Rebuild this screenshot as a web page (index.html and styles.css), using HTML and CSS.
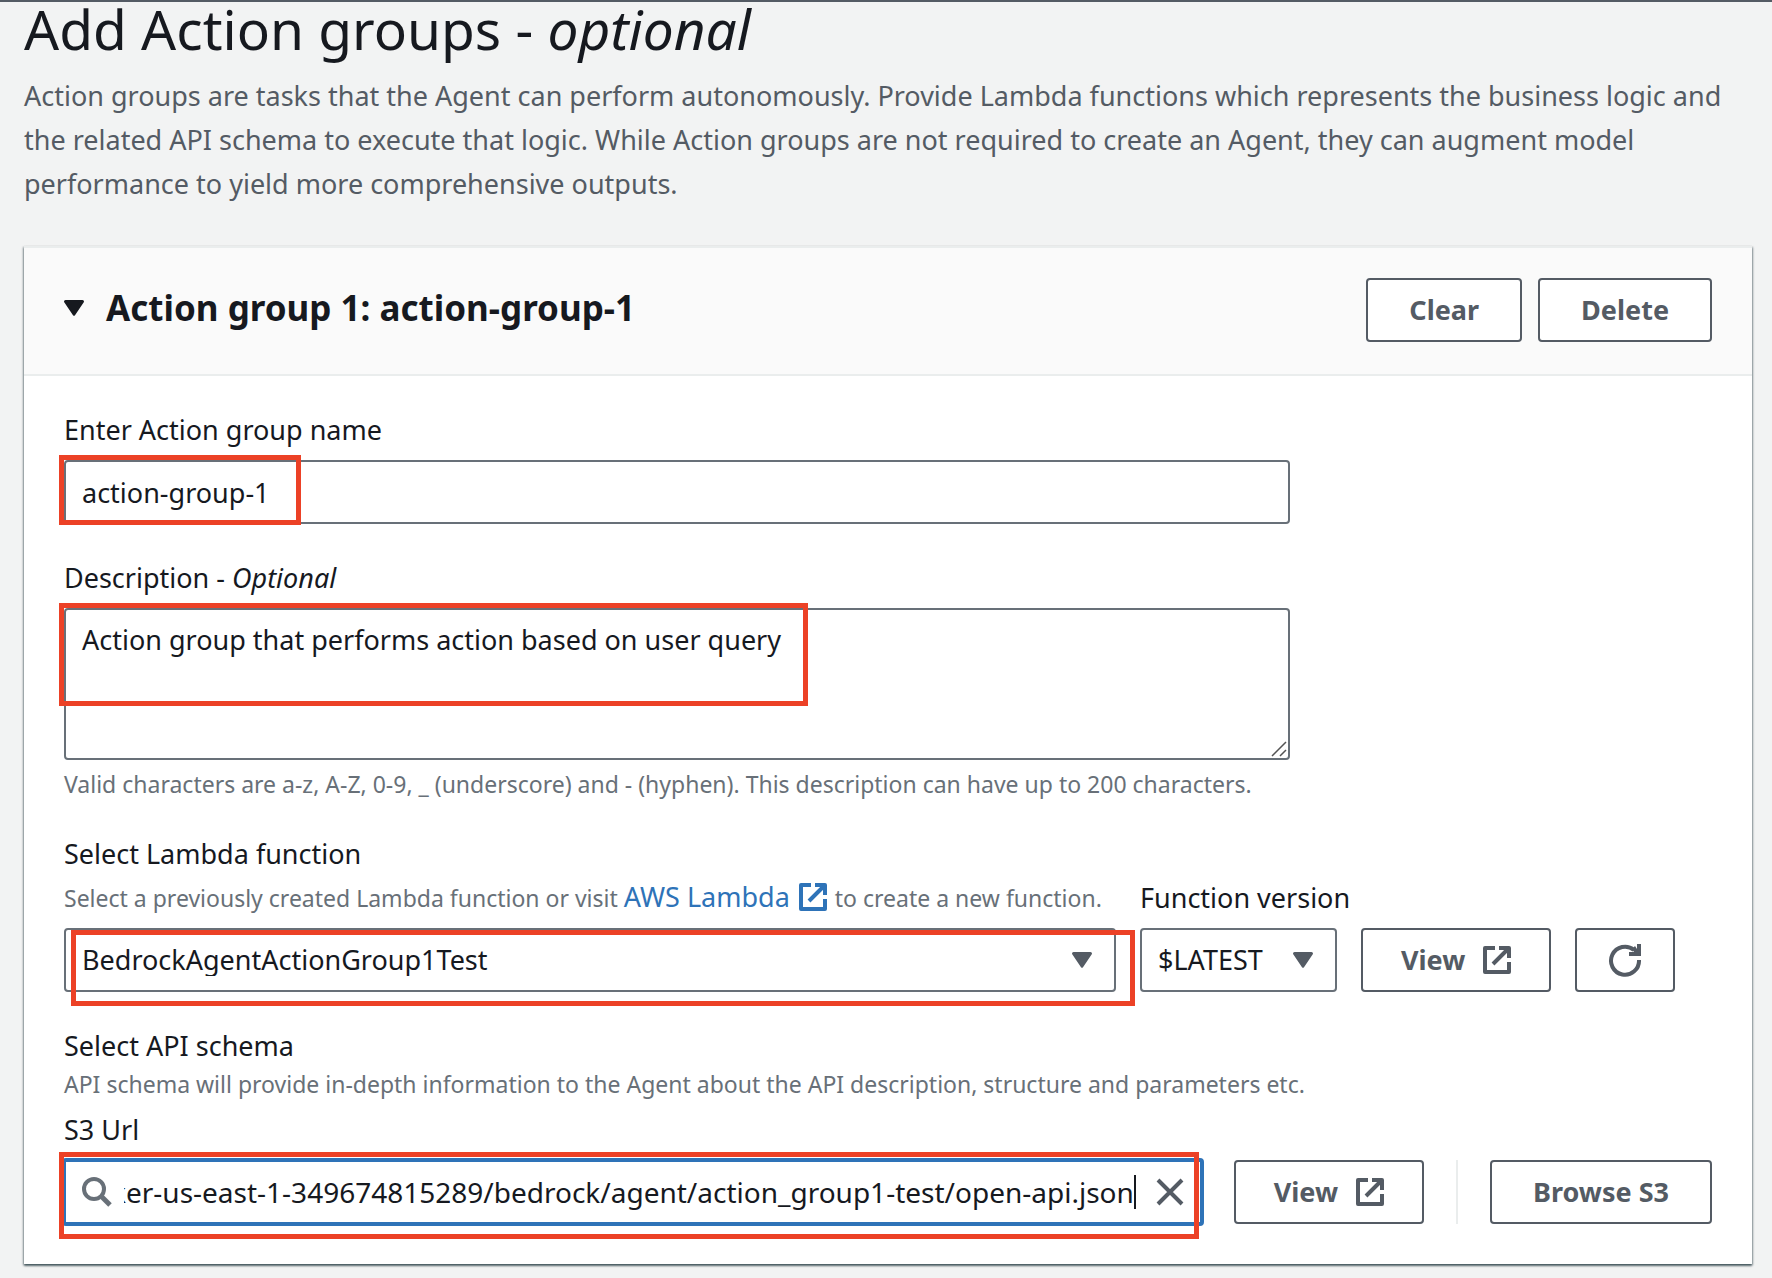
FILE: index.html
```html
<!DOCTYPE html>
<html lang="en">
<head>
<meta charset="utf-8">
<meta name="viewport" content="width=device-width, initial-scale=1">
<title>Add Action groups</title>
<link rel="stylesheet" href="styles.css">
</head>
<body>
<svg class="sprite" aria-hidden="true">
  <symbol id="icon-external" viewBox="0 0 28 28">
    <path d="M12 2H2v24h24V16M16 2h10v10M25 3L10 18" fill="none" stroke="currentColor" stroke-width="4" stroke-linejoin="round"/>
  </symbol>
  <symbol id="icon-caret" viewBox="0 0 20 16">
    <path d="M1.500 0h17q1.500 0 1.500 1.500 0 .5-.4 1L11 15.200q-1 1.300-2 0L.4 2.500Q0 2 0 1.500 0 0 1.500 0z" fill="currentColor"/>
  </symbol>
</svg>
<main class="page">
  <header class="page-header">
    <h1 class="page-title">Add Action groups - <em>optional</em></h1>
    <p class="page-description">Action groups are tasks that the Agent can perform autonomously. Provide Lambda functions which represents the business logic and the related API schema to execute that logic. While Action groups are not required to create an Agent, they can augment model performance to yield more comprehensive outputs.</p>
  </header>

  <section class="card">
    <div class="card-header">
      <h2 class="card-title"><svg class="card-caret" aria-hidden="true"><use href="#icon-caret"/></svg>Action group 1: action-group-1</h2>
      <div class="card-actions">
        <button class="button" type="button">Clear</button>
        <button class="button" type="button">Delete</button>
      </div>
    </div>

    <form class="card-body">
      <div class="field field-limited">
        <label class="label" for="group-name">Enter Action group name</label>
        <div class="control">
          <input class="input" id="group-name" type="text" value="action-group-1">
          <span class="highlight highlight-name"></span>
        </div>
      </div>

      <div class="field field-limited">
        <label class="label" for="description">Description - <em>Optional</em></label>
        <div class="control">
          <textarea class="input textarea" id="description">Action group that performs action based on user query</textarea>
          <svg class="grip" viewBox="0 0 16 16" aria-hidden="true"><path d="M1 15L15 1M9 15l6-6" stroke="#545454" stroke-width="1.500" fill="none"/></svg>
          <span class="highlight highlight-description"></span>
        </div>
        <p class="hint">Valid characters are a-z, A-Z, 0-9, _ (underscore) and - (hyphen). This description can have up to 200 characters.</p>
      </div>

      <div class="lambda-row">
        <div class="lambda-function">
          <label class="label" for="lambda">Select Lambda function</label>
          <p class="hint hint-link">Select a previously created Lambda function or visit <a class="link" href="#lambda">AWS Lambda <svg class="link-icon" aria-hidden="true"><use href="#icon-external"/></svg></a> to create a new function.</p>
          <div class="control">
            <select class="input select" id="lambda"><option>BedrockAgentActionGroup1Test</option></select>
            <svg class="select-caret" aria-hidden="true"><use href="#icon-caret"/></svg>
            <span class="highlight highlight-lambda"></span>
          </div>
        </div>
        <div class="lambda-version">
          <label class="label" for="version">Function version</label>
          <div class="control">
            <select class="input select" id="version"><option>$LATEST</option></select>
            <svg class="select-caret" aria-hidden="true"><use href="#icon-caret"/></svg>
          </div>
        </div>
        <button class="button button-external" type="button">View <svg class="button-icon" aria-hidden="true"><use href="#icon-external"/></svg></button>
        <button class="button button-refresh" type="button" aria-label="Refresh">
          <svg class="refresh-icon" viewBox="0 0 34 34" aria-hidden="true"><path d="M31 17a14 14 0 1 1-5-10" fill="none" stroke="currentColor" stroke-width="4"/><path d="M29 1h4v12H21V9h5l-2-3 3-3 2 3z" fill="currentColor"/></svg>
        </button>
      </div>

      <div class="field schema">
        <h3 class="label">Select API schema</h3>
        <p class="hint schema-hint">API schema will provide in-depth information to the Agent about the API description, structure and parameters etc.</p>
        <label class="label schema-label" for="s3-url">S3 Url</label>
        <div class="s3-row">
          <div class="control search">
            <svg class="search-icon" viewBox="0 0 30 30" aria-hidden="true"><path d="M20 20l8 8" stroke="currentColor" stroke-width="5"/><circle cx="12" cy="12" r="10" fill="none" stroke="currentColor" stroke-width="4"/></svg>
            <input class="search-input" id="s3-url" type="text" value="ker-us-east-1-349674815289/bedrock/agent/action_group1-test/open-api.json">
            <span class="text-cursor"></span>
            <button class="clear" type="button" aria-label="Clear S3 Url"><svg class="clear-icon" viewBox="0 0 28 28" aria-hidden="true"><path d="M2 2l24 24M26 2L2 26" stroke="currentColor" stroke-width="4"/></svg></button>
            <span class="highlight highlight-s3"></span>
          </div>
          <button class="button button-external" type="button">View <svg class="button-icon" aria-hidden="true"><use href="#icon-external"/></svg></button>
          <span class="divider"></span>
          <button class="button" type="button">Browse S3</button>
        </div>
      </div>
    </form>
  </section>
</main>
<script src="script.js"></script>
</body>
</html>
```
FILE: styles.css
```css
* {
  box-sizing: border-box;
}

body {
  margin: 0;
  background: #f2f3f3;
  color: #16191f;
  font: 27px/32px "Noto Sans", "Open Sans", sans-serif;
}

h1, h2, h3, p {
  margin: 0;
}

button, input, select, textarea {
  margin: 0;
  font: inherit;
  color: inherit;
}

.sprite {
  position: absolute;
  width: 0;
  height: 0;
}

.page {
  padding: 0 20px 14px 24px;
  border-top: 2px solid #545b64;
}

.page-title {
  font-size: 55px;
  font-weight: 400;
  line-height: 54px;
}

.page-description {
  padding: 18px 24px 40px 0;
  color: #545b64;
  line-height: 44px;
}

.card {
  background: #fff;
  border-top: 2px solid #eaeded;
  box-shadow: 0 2px 2px rgba(0, 28, 36, 0.5), 1px 1px 2px rgba(0, 28, 36, 0.3), -1px 1px 2px rgba(0, 28, 36, 0.3);
}

.card-header {
  display: flex;
  align-items: center;
  justify-content: space-between;
  padding: 30px 40px 32px;
  background: #fafafa;
  border-bottom: 2px solid #eaeded;
}

.card-title {
  display: flex;
  align-items: center;
  gap: 22px;
  padding-bottom: 4px;
  font-size: 35px;
  font-weight: 700;
  line-height: 44px;
}

.card-caret {
  width: 20px;
  height: 16px;
}

.card-actions {
  display: flex;
  gap: 16px;
}

.button {
  display: flex;
  align-items: center;
  justify-content: center;
  height: 64px;
  padding: 0 41px;
  background: #fff;
  border: 2px solid #545b64;
  border-radius: 4px;
  color: #545b64;
  font-weight: 700;
  white-space: nowrap;
}

.button-external {
  gap: 18px;
  padding: 0 38px;
}

.button-icon {
  width: 28px;
  height: 28px;
}

.button-refresh {
  width: 100px;
  padding: 0;
}

.refresh-icon {
  width: 34px;
  height: 34px;
}

.card-body {
  display: flex;
  flex-direction: column;
  gap: 38px;
  padding: 38px 40px 40px;
}

.field-limited {
  max-width: 1226px;
}

.label {
  display: block;
  font-size: 27px;
  font-weight: 400;
  line-height: 32px;
  white-space: nowrap;
}

.control {
  position: relative;
  margin-top: 14px;
}

.input {
  display: block;
  width: 100%;
  height: 64px;
  padding: 0 16px;
  background: #fff;
  border: 2px solid #687078;
  border-radius: 4px;
}

.textarea {
  height: 152px;
  padding: 14px 16px;
  resize: none;
}

.grip {
  position: absolute;
  right: 3px;
  bottom: 3px;
  width: 16px;
  height: 16px;
}

.select {
  appearance: none;
  padding-right: 60px;
}

.select-caret {
  position: absolute;
  top: 24px;
  right: 24px;
  width: 20px;
  height: 16px;
  color: #545b64;
  pointer-events: none;
}

.hint {
  padding-top: 8px;
  color: #687078;
  font-size: 23px;
  line-height: 32px;
}

.hint-link {
  padding-top: 11px;
}

.link {
  color: #2e73b8;
  font-size: 27px;
  text-decoration: none;
}

.link-icon {
  width: 28px;
  height: 28px;
  margin: 0 2px;
  vertical-align: -4px;
}

.lambda-row {
  display: grid;
  grid-template-columns: minmax(0, 1052px) 197px auto auto;
  align-items: end;
  justify-content: start;
  gap: 24px;
}

.highlight {
  position: absolute;
  border: 5px solid #ec4126;
  pointer-events: none;
}

.highlight-name {
  top: -5px;
  left: -5px;
  width: 242px;
  height: 70px;
}

.highlight-description {
  top: -5px;
  left: -5px;
  width: 749px;
  height: 103px;
}

.highlight-lambda {
  top: 2px;
  left: 7px;
  right: -19px;
  height: 76px;
}

.highlight-s3 {
  top: -8px;
  left: -5px;
  right: 3px;
  height: 87px;
}

.schema-hint {
  padding-top: 6px;
}

.schema-label {
  padding-top: 14px;
}

.s3-row {
  display: flex;
  align-items: center;
  gap: 32px;
  margin-top: 14px;
}

.search {
  display: flex;
  flex: 1;
  align-items: center;
  height: 64px;
  margin: 0;
  padding: 0 18px;
  border-radius: 2px;
  outline: 4px solid #2e73b8;
  outline-offset: -2px;
}

.search-icon {
  width: 30px;
  height: 30px;
  margin-right: 12px;
  color: #687078;
}

.search-input {
  flex: 1;
  min-width: 0;
  height: 44px;
  padding: 0;
  background: none;
  border: 0;
  outline: 0;
  font-size: 28px;
}

.text-cursor {
  width: 2px;
  height: 34px;
  background: #16191f;
}

.clear {
  display: flex;
  margin-left: 20px;
  padding: 0;
  background: none;
  border: 0;
  color: #545b64;
}

.clear-icon {
  width: 28px;
  height: 28px;
}

.divider {
  width: 2px;
  height: 64px;
  background: #eaeded;
}
```
FILE: script.js
```js
// Keep the end of a long S3 URL in view.
const s3Url = document.getElementById("s3-url");
s3Url.scrollLeft = s3Url.scrollWidth;
```
